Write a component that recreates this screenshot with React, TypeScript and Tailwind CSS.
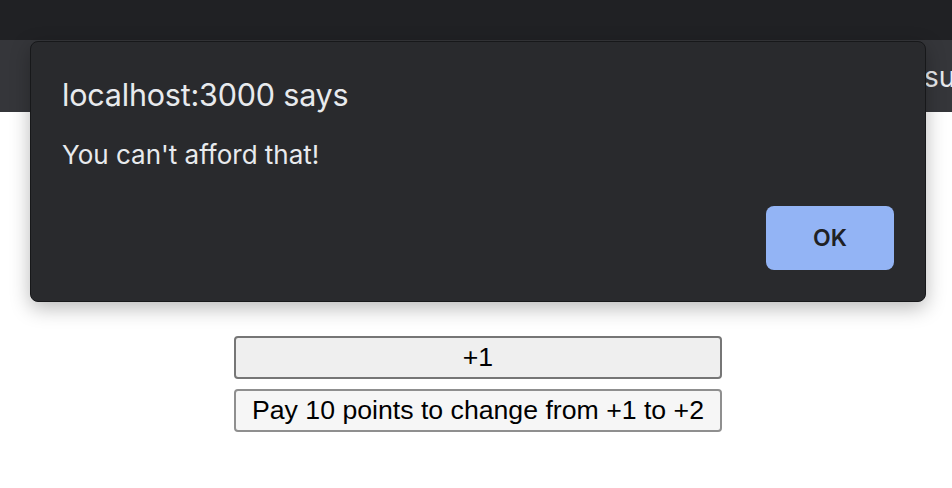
import React from "react";

export default function App() {
  return (
    <div className="relative w-[952px] h-[488px] overflow-hidden bg-white" style={{ fontFamily: "Inter, 'Noto Sans', sans-serif" }}>
      <div className="h-[40px] bg-[#202124]" />
      <div className="h-[72px] bg-[#35363a] overflow-hidden flex items-start pt-[20px]">
        <span className="pl-[924px] whitespace-nowrap text-[28px] leading-[34px] text-[#e8eaed]">sui</span>
      </div>
      <div className="pt-[224px] pl-[234px] flex flex-col gap-[10px]" style={{ fontFamily: "'Liberation Sans', Arial, sans-serif" }}>
        <button className="w-[488px] h-[43px] rounded-[4px] border-2 border-[#767676] bg-[#efefef] text-[26.67px] leading-none text-black">+1</button>
        <button className="w-[488px] h-[43px] rounded-[4px] border-2 border-[#8f8f8f] bg-[#f6f6f6] text-[26.67px] leading-none text-black">Pay 10 points to change from +1 to +2</button>
      </div>
      <div className="absolute left-[30px] top-[41px] w-[896px] h-[261px] rounded-[8px] bg-[#292a2d] border border-[#17181a] shadow-[0_6px_20px_rgba(0,0,0,0.28)] flex flex-col pl-[31px] pr-[31px] pt-[36px] pb-[31px] text-[#e8eaed]">
        <div className="text-[30.5px] leading-[34px] tracking-[-0.2px]">localhost:3000 says</div>
        <div className="mt-[28px] text-[26px] leading-[30px]">You can't afford that!</div>
        <div className="mt-auto flex justify-end">
          <div className="w-[128px] h-[64px] rounded-[8px] bg-[#93b4f5] flex items-center justify-center text-[23px] font-semibold text-[#202124]">OK</div>
        </div>
      </div>
    </div>
  );
}
